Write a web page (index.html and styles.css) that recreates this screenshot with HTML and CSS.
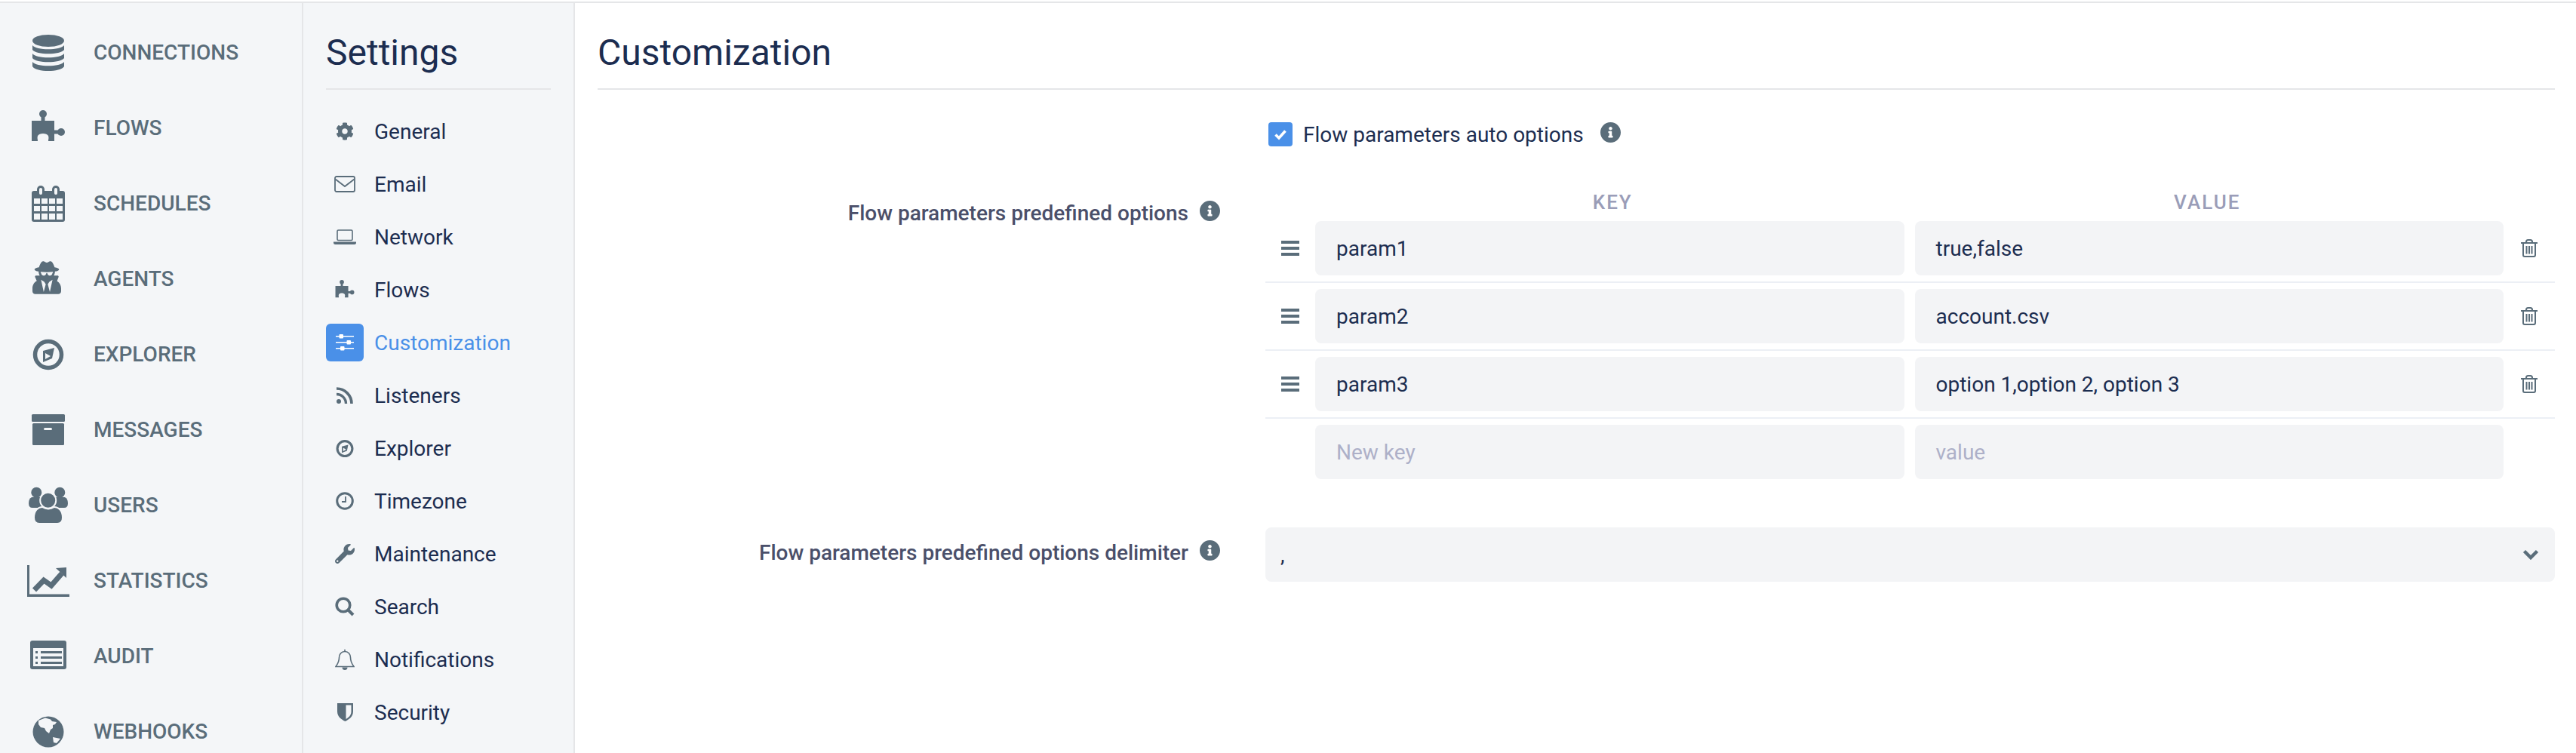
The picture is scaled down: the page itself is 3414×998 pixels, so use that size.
FILE: index.html
```html
<!DOCTYPE html>
<html lang="en">
<head>
<meta charset="utf-8">
<title>Settings - Customization</title>
<link rel="stylesheet" href="styles.css">
</head>
<body>
<svg class="defs" aria-hidden="true">
  <symbol id="i-database" viewBox="0 0 60 60">
    <ellipse cx="30" cy="15" rx="21" ry="8"/>
    <path d="M9 21C14 28 46 28 51 21V27C46 34 14 34 9 27Z"/>
    <path d="M9 32C14 39 46 39 51 32V38C46 45 14 45 9 38Z"/>
    <path d="M9 43C14 50 46 50 51 43V49C46 57 14 57 9 49Z"/>
  </symbol>
  <symbol id="i-puzzle" viewBox="0 0 60 60">
    <circle cx="23" cy="12" r="5"/><rect x="20.5" y="14" width="5" height="9"/>
    <path d="M8 21H38V48H30C30 45 31 44 30 41C28 37 18 37 16 41C15 44 16 45 16 48H8Z"/>
    <circle cx="47" cy="36" r="5"/><rect x="36" y="33.5" width="8" height="5"/>
  </symbol>
  <symbol id="i-calendar" viewBox="0 0 60 60">
    <path d="M11 14H49Q52 14 52 17V52Q52 55 49 55H11Q8 55 8 52V17Q8 14 11 14Z"/>
    <g class="cut">
      <rect x="11" y="24" width="8" height="7"/><rect x="21" y="24" width="8" height="7"/><rect x="31" y="24" width="8" height="7"/><rect x="41" y="24" width="8" height="7"/>
      <rect x="11" y="34" width="8" height="7"/><rect x="21" y="34" width="8" height="7"/><rect x="31" y="34" width="8" height="7"/><rect x="41" y="34" width="8" height="7"/>
      <rect x="11" y="44" width="8" height="8"/><rect x="21" y="44" width="8" height="8"/><rect x="31" y="44" width="8" height="8"/><rect x="41" y="44" width="8" height="8"/>
    </g>
    <rect x="15" y="7" width="10" height="14" rx="5"/><rect x="35" y="7" width="10" height="14" rx="5"/>
    <rect class="cut" x="18" y="10" width="4" height="9" rx="2"/><rect class="cut" x="38" y="10" width="4" height="9" rx="2"/>
  </symbol>
  <symbol id="i-agent" viewBox="0 0 60 60">
    <svg x="9" y="7" width="38" height="44" viewBox="0 0 448 512"><path d="M383.9 308.3l23.9-62.6c4-10.5-3.7-21.7-15-21.7h-58.5c11-18.9 17.8-40.6 17.8-64v-.3c39.2-7.8 64-19.1 64-31.7 0-13.3-27.3-25.1-70.1-33-9.2-32.8-27-65.8-40.6-82.8-9.5-11.9-25.9-15.6-39.5-8.8l-27.6 13.8c-9 4.5-19.6 4.5-28.6 0L182.1 3.4c-13.6-6.8-30-3.1-39.5 8.8-13.5 17-31.4 50-40.6 82.8-42.7 7.9-70 19.7-70 33 0 12.6 24.8 23.9 64 31.7v.3c0 23.4 6.8 45.1 17.8 64H56.3c-11.5 0-19.2 11.7-14.7 22.3l25.8 60.2C27.3 329.8 0 372.7 0 422.4v44.8C0 491.9 20.1 512 44.8 512h358.4c24.7 0 44.8-20.1 44.8-44.8v-44.8c0-48.4-25.8-90.4-64.1-114.1zM176 480l-41.6-192 49.6 32 24 40-32 120zm96 0l-32-120 24-40 49.6-32L272 480zm41.7-298.5c-3.9 11.9-7 24.6-16.5 33.4-10.1 9.3-48 22.4-64-25-2.8-8.4-15.4-8.4-18.3 0-17 50.2-56 32.4-64 25-9.5-8.8-12.7-21.5-16.5-33.4-.8-2.5-6.3-5.7-6.3-5.8v-10.8c28.3 3.6 61 5.8 96 5.8s67.7-2.1 96-5.8v10.8c-.1.1-5.6 3.2-6.4 5.8z"/></svg>
  </symbol>
  <symbol id="i-compass" viewBox="0 0 60 60">
    <circle class="ring" cx="30" cy="31" r="17.5" stroke-width="5.5"/>
    <path d="M23 26L38 22L35 36L23 41Z"/>
    <path class="cut" d="M26 29V37L33 33Z"/>
  </symbol>
  <symbol id="i-archive" viewBox="0 0 60 60">
    <rect x="8" y="10" width="44" height="10" rx="1.5"/>
    <rect x="9" y="22" width="42" height="29" rx="1.5"/>
    <rect class="cut" x="24" y="28" width="11" height="3" rx="1.5"/>
  </symbol>
  <symbol id="i-users" viewBox="0 0 60 60">
    <circle cx="14.3" cy="13.7" r="7"/><circle cx="45.3" cy="13.7" r="7"/>
    <path d="M8 20H20L24 34H9Q4 34 4 28Q4 22 8 20Z"/><path d="M40 20H52Q56 22 56 28Q56 34 51 34H36Z"/>
    <circle class="halo" cx="29.7" cy="24.3" r="10.5"/>
    <path class="halo" d="M11 47C11 37 17 33 22 33Q30 38 38 33C43 33 49 37 49 47Q49 55 42 55H18Q11 55 11 47Z"/>
  </symbol>
  <symbol id="i-chart" viewBox="0 0 60 60">
    <path d="M2 10H5V48.5H58V52H2Z"/>
    <path class="line" d="M11.5 43L24 30L34 37L48 21" stroke-width="7"/>
    <path d="M40 14L54 13V27Z"/>
  </symbol>
  <symbol id="i-audit" viewBox="0 0 60 60">
    <rect x="6" y="10" width="48" height="38" rx="3"/>
    <rect class="cut" x="10" y="20" width="40" height="24"/>
    <path d="M13 24h3v3h-3zM20 24h28v3H20zM13 31h3v3h-3zM20 31h28v3H20zM13 38h3v3h-3zM20 38h28v3H20z"/>
  </symbol>
  <symbol id="i-globe" viewBox="0 0 60 60">
    <circle cx="30" cy="31" r="20.5"/>
    <path class="cut" d="M17 16L26 12.5L33 14.5L35 17L41 18L39 21L36 22L36 26L33 28L31 33L27 30L25 26L20 25L17 21Z"/>
    <path class="cut" d="M36 38L46 40L41 46L37 45Z"/>
  </symbol>
  <symbol id="i-cog" viewBox="0 0 512 512"><path d="M487.4 315.7l-42.6-24.6c4.3-23.2 4.3-47 0-70.2l42.6-24.6c4.9-2.8 7.1-8.6 5.5-14-11.1-35.6-30-67.8-54.7-94.6-3.8-4.1-10-5.1-14.8-2.3L380.8 110c-17.9-15.4-38.5-27.3-60.8-35.1V25.8c0-5.6-3.9-10.5-9.4-11.7-36.7-8.2-74.3-7.8-109.2 0-5.5 1.2-9.4 6.1-9.4 11.7V75c-22.2 7.9-42.8 19.8-60.8 35.1L88.7 85.5c-4.9-2.8-11-1.9-14.8 2.3-24.7 26.7-43.6 58.9-54.7 94.6-1.7 5.4.6 11.2 5.5 14L67.3 221c-4.3 23.2-4.3 47 0 70.2l-42.6 24.6c-4.9 2.8-7.1 8.6-5.5 14 11.1 35.6 30 67.8 54.7 94.6 3.8 4.1 10 5.1 14.8 2.3l42.6-24.6c17.9 15.4 38.5 27.3 60.8 35.1v49.2c0 5.6 3.9 10.5 9.4 11.7 36.7 8.2 74.3 7.8 109.2 0 5.5-1.2 9.4-6.1 9.4-11.7v-49.2c22.2-7.9 42.8-19.8 60.8-35.1l42.6 24.6c4.9 2.8 11 1.9 14.8-2.3 24.7-26.7 43.6-58.9 54.7-94.6 1.5-5.5-.7-11.3-5.6-14.1zM256 336c-44.1 0-80-35.9-80-80s35.9-80 80-80 80 35.9 80 80-35.9 80-80 80z"/></symbol>
  <symbol id="i-mail" viewBox="0 0 28 22">
    <rect class="ring" x="1" y="1" width="26" height="20" rx="2" stroke-width="1.8"/>
    <path class="line" d="M1.5 4.5L14 14L26.5 4.5" stroke-width="1.8"/>
  </symbol>
  <symbol id="i-laptop" viewBox="0 0 30 20">
    <rect class="ring" x="5" y="1" width="20" height="13.5" rx="1.5" stroke-width="1.6"/>
    <path d="M0 16.5H30V17.5Q30 20 27.5 20H2.5Q0 20 0 17.5Z"/>
  </symbol>
  <symbol id="i-sliders" viewBox="0 0 24 22">
    <path d="M0 2H24V3.5H0ZM0 10H24V11.5H0ZM0 18H24V19.5H0Z"/>
    <rect x="4.5" y="0" width="5.5" height="5.5" rx="1"/><rect x="14.5" y="8" width="5.5" height="5.5" rx="1"/><rect x="6" y="16" width="5.5" height="5.5" rx="1"/>
  </symbol>
  <symbol id="i-rss" viewBox="0 0 22 22">
    <circle cx="3" cy="19" r="3"/>
    <path class="line" d="M0 9.5A12.5 12.5 0 0 1 12.5 22" stroke-width="3.4"/>
    <path class="line" d="M0 2A20 20 0 0 1 20 22" stroke-width="3.6"/>
  </symbol>
  <symbol id="i-clock" viewBox="0 0 24 24">
    <circle class="ring" cx="12" cy="12" r="10.3" stroke-width="3"/>
    <path class="line" d="M13 6V13H8" stroke-width="1.8"/>
  </symbol>
  <symbol id="i-wrench" viewBox="0 0 512 512"><path d="M507.73 109.1c-2.24-9.03-13.54-12.09-20.12-5.51l-74.36 74.36-67.88-11.31-11.31-67.88 74.36-74.36c6.62-6.62 3.43-17.9-5.66-20.16-47.38-11.74-99.55.91-136.58 37.93-39.64 39.64-50.55 97.1-34.05 147.2L18.74 402.76c-24.99 24.99-24.99 65.51 0 90.5 24.99 24.99 65.51 24.99 90.5 0l213.21-213.21c50.12 16.71 107.47 5.68 147.37-34.22 37.07-37.07 49.7-89.32 37.91-136.73zM64 472c-13.25 0-24-10.75-24-24 0-13.26 10.75-24 24-24s24 10.74 24 24c0 13.25-10.75 24-24 24z"/></symbol>
  <symbol id="i-search" viewBox="0 0 26 26">
    <circle class="ring" cx="11" cy="11" r="8.8" stroke-width="3.6"/>
    <path class="line" d="M17.5 17.5L24 24" stroke-width="4"/>
  </symbol>
  <symbol id="i-bell" viewBox="0 0 26 28">
    <path class="line" d="M13 3.5C8 3.5 5.5 7.5 5.5 11.5C5.5 17.5 3.5 20 1 23.5H25C22.5 20 20.5 17.5 20.5 11.5C20.5 7.5 18 3.5 13 3.5ZM13 3.5V.8" stroke-width="1.6"/>
    <path d="M9.5 24.5H16.5C16.5 27 15 28 13 28C11 28 9.5 27 9.5 24.5Z"/>
  </symbol>
  <symbol id="i-shield" viewBox="0 0 21 24">
    <path d="M0 0H21V11C21 18 15 22 10.5 24C6 22 0 18 0 11ZM11.5 2.5V21C15 19 18.5 16 18.5 11V2.5Z" fill-rule="evenodd"/>
  </symbol>
  <symbol id="i-info" viewBox="0 0 496 496"><path transform="translate(-8 -8)" d="M256 8C119.043 8 8 119.083 8 256c0 136.997 111.043 248 248 248s248-111.003 248-248C504 119.083 392.957 8 256 8zm0 110c23.196 0 42 18.804 42 42s-18.804 42-42 42-42-18.804-42-42 18.804-42 42-42zm56 254c0 6.627-5.373 12-12 12h-88c-6.627 0-12-5.373-12-12v-24c0-6.627 5.373-12 12-12h12v-64h-12c-6.627 0-12-5.373-12-12v-24c0-6.627 5.373-12 12-12h64c6.627 0 12 5.373 12 12v100h12c6.627 0 12 5.373 12 12v24z"/></symbol>
  <symbol id="i-trash" viewBox="0 0 22 24">
    <path class="line" d="M0 5H22M7 5V3.5Q7 1 9.5 1H12.5Q15 1 15 3.5V5" stroke-width="2"/>
    <path class="line" d="M3 5V21Q3 23 5 23H17Q19 23 19 21V5" stroke-width="2"/>
    <path d="M6.5 9H8.5V19.5H6.5ZM10 9H12V19.5H10ZM13.5 9H15.5V19.5H13.5Z"/>
  </symbol>
</svg>

<div class="app">
  <nav class="nav">
    <a class="nav-item"><svg class="nav-icon"><use href="#i-database"/></svg><span>CONNECTIONS</span></a>
    <a class="nav-item"><svg class="nav-icon"><use href="#i-puzzle"/></svg><span>FLOWS</span></a>
    <a class="nav-item"><svg class="nav-icon"><use href="#i-calendar"/></svg><span>SCHEDULES</span></a>
    <a class="nav-item"><svg class="nav-icon"><use href="#i-agent"/></svg><span>AGENTS</span></a>
    <a class="nav-item"><svg class="nav-icon"><use href="#i-compass"/></svg><span>EXPLORER</span></a>
    <a class="nav-item"><svg class="nav-icon"><use href="#i-archive"/></svg><span>MESSAGES</span></a>
    <a class="nav-item"><svg class="nav-icon"><use href="#i-users"/></svg><span>USERS</span></a>
    <a class="nav-item"><svg class="nav-icon"><use href="#i-chart"/></svg><span>STATISTICS</span></a>
    <a class="nav-item"><svg class="nav-icon"><use href="#i-audit"/></svg><span>AUDIT</span></a>
    <a class="nav-item"><svg class="nav-icon"><use href="#i-globe"/></svg><span>WEBHOOKS</span></a>
  </nav>

  <aside class="settings">
    <h1 class="title">Settings</h1>
    <ul class="menu">
      <li class="menu-item"><span class="menu-box"><svg class="w24 h24"><use href="#i-cog"/></svg></span>General</li>
      <li class="menu-item"><span class="menu-box"><svg class="w28 h22"><use href="#i-mail"/></svg></span>Email</li>
      <li class="menu-item"><span class="menu-box"><svg class="w30 h20"><use href="#i-laptop"/></svg></span>Network</li>
      <li class="menu-item"><span class="menu-box"><svg class="w34 h34"><use href="#i-puzzle"/></svg></span>Flows</li>
      <li class="menu-item active"><span class="menu-box"><svg class="w24 h22"><use href="#i-sliders"/></svg></span>Customization</li>
      <li class="menu-item"><span class="menu-box"><svg class="w22 h22"><use href="#i-rss"/></svg></span>Listeners</li>
      <li class="menu-item"><span class="menu-box"><svg class="w34 h34"><use href="#i-compass"/></svg></span>Explorer</li>
      <li class="menu-item"><span class="menu-box"><svg class="w24 h24"><use href="#i-clock"/></svg></span>Timezone</li>
      <li class="menu-item"><span class="menu-box"><svg class="w26 h26"><use href="#i-wrench"/></svg></span>Maintenance</li>
      <li class="menu-item"><span class="menu-box"><svg class="w26 h26"><use href="#i-search"/></svg></span>Search</li>
      <li class="menu-item"><span class="menu-box"><svg class="w26 h28"><use href="#i-bell"/></svg></span>Notifications</li>
      <li class="menu-item"><span class="menu-box"><svg class="w21 h24"><use href="#i-shield"/></svg></span>Security</li>
    </ul>
  </aside>

  <main class="main">
    <h1 class="title">Customization</h1>

    <div class="form-row row-auto">
      <div></div>
      <div class="check-line">
        <span class="checkbox"><svg viewBox="0 0 20 20" class="check"><path d="M3.5 10.5L8 15L16.5 5.5"/></svg></span>
        <span class="check-label">Flow parameters auto options</span>
        <svg class="info info-auto"><use href="#i-info"/></svg>
      </div>
    </div>

    <div class="form-row row-table">
      <div class="label label-table">Flow parameters predefined options<svg class="info"><use href="#i-info"/></svg></div>
      <div class="kv">
        <div class="kv-row kv-head">
          <span></span><span class="head-key">KEY</span><span class="head-value">VALUE</span><span></span>
        </div>
        <div class="kv-row kv-line">
          <svg class="drag" viewBox="0 0 24 20"><path d="M0 0H24V4H0ZM0 8H24V12H0ZM0 16H24V20H0Z"/></svg>
          <div class="field">param1</div><div class="field">true,false</div>
          <svg class="trash"><use href="#i-trash"/></svg>
        </div>
        <div class="kv-row kv-line">
          <svg class="drag" viewBox="0 0 24 20"><path d="M0 0H24V4H0ZM0 8H24V12H0ZM0 16H24V20H0Z"/></svg>
          <div class="field">param2</div><div class="field">account.csv</div>
          <svg class="trash"><use href="#i-trash"/></svg>
        </div>
        <div class="kv-row kv-line">
          <svg class="drag" viewBox="0 0 24 20"><path d="M0 0H24V4H0ZM0 8H24V12H0ZM0 16H24V20H0Z"/></svg>
          <div class="field">param3</div><div class="field">option 1,option 2, option 3</div>
          <svg class="trash"><use href="#i-trash"/></svg>
        </div>
        <div class="kv-row kv-new">
          <span></span>
          <div class="field placeholder">New key</div><div class="field placeholder">value</div>
          <span></span>
        </div>
      </div>
    </div>

    <div class="form-row row-select">
      <div class="label label-select">Flow parameters predefined options delimiter<svg class="info"><use href="#i-info"/></svg></div>
      <div class="select">
        <span class="select-value">,</span>
        <svg class="chevron" viewBox="0 0 22 14"><path d="M2.5 2.5L11 11L19.5 2.5"/></svg>
      </div>
    </div>
  </main>
</div>
</body>
</html>
```
FILE: styles.css
```css
:root {
  --panel: #f4f6f8;
  --icon: #5a6d7a;
  --ink: #1c2d50;
  --rule: #e5e6e8;
}
* { box-sizing: border-box; }
html, body { margin: 0; height: 100%; background: #fff; overflow: hidden; }
body {
  padding-top: 2px;
  font-family: Roboto, "Liberation Sans", sans-serif;
  color: var(--ink);
}
svg { fill: currentColor; }
svg.defs { display: block; width: 0; height: 0; overflow: hidden; }
.cut { fill: var(--panel); }
.ring { fill: none; stroke: currentColor; }
.line { fill: none; stroke: currentColor; }
.halo { stroke: var(--panel); stroke-width: 2; }

.app {
  display: flex;
  height: 996px;
  border-top: 2px solid var(--rule);
  overflow: hidden;
}

.nav {
  flex: 0 0 402px;
  padding-top: 15px;
  background: var(--panel);
  border-right: 2px solid var(--rule);
  color: var(--icon);
}
.nav-item {
  display: flex;
  align-items: center;
  gap: 30px;
  height: 100px;
  padding-left: 34px;
  font-size: 28px;
  font-weight: 500;
}
.nav-icon { width: 60px; height: 60px; flex: none; }

.settings {
  flex: 0 0 360px;
  padding: 0 30px;
  background: var(--panel);
  border-right: 2px solid var(--rule);
}
.title {
  margin: 0;
  padding: 34px 0 15px;
  font-size: 48px;
  line-height: 64px;
  font-weight: 400;
  border-bottom: 2px solid var(--rule);
}
.menu { list-style: none; margin: 20px 0 0; padding: 0; }
.menu-item {
  display: flex;
  align-items: center;
  gap: 14px;
  height: 70px;
  font-size: 28px;
}
.menu-box {
  display: flex;
  align-items: center;
  justify-content: center;
  width: 50px;
  height: 50px;
  border-radius: 6px;
  color: var(--icon);
}
.active { color: #4a90e8; }
.active .menu-box { background: #4a90e8; color: #fff; }
.w21 { width: 21px; } .w22 { width: 22px; } .w24 { width: 24px; } .w26 { width: 26px; }
.w28 { width: 28px; } .w30 { width: 30px; } .w34 { width: 34px; }
.h20 { height: 20px; } .h22 { height: 22px; } .h24 { height: 24px; } .h26 { height: 26px; }
.h28 { height: 28px; } .h34 { height: 34px; }

.main { flex: 1; min-width: 0; padding: 0 28px 0 30px; }
.form-row {
  display: grid;
  grid-template-columns: 825px 1fr;
  column-gap: 60px;
  align-items: start;
}
.row-auto { margin-top: 41px; }
.row-table { margin-top: 54px; }
.row-select { margin-top: 56px; }

.check-line {
  display: flex;
  align-items: center;
  height: 36px;
  padding-left: 4px;
  font-size: 28px;
}
.checkbox {
  display: flex;
  align-items: center;
  justify-content: center;
  width: 32px;
  height: 32px;
  margin-right: 14px;
  border-radius: 4px;
  background: #4a90e8;
}
.check { width: 20px; height: 20px; fill: none; stroke: #fff; stroke-width: 3.6; }
.check-label { margin-right: 22px; }
.info { flex: none; width: 27px; height: 27px; margin-left: 15px; margin-top: -6px; color: var(--icon); }
.info-auto { margin-left: 0; }

.label {
  display: flex;
  align-items: center;
  justify-content: flex-end;
  height: 36px;
  font-size: 28px;
  font-weight: 500;
  color: #4a4f6a;
}
.label-table { margin-top: 14px; }
.label-select { margin-top: 15px; }

.kv-row {
  display: grid;
  grid-template-columns: 52px 1fr 1fr 54px;
  column-gap: 14px;
  align-items: center;
}
.kv-head {
  height: 35px;
  font-size: 26px;
  font-weight: 500;
  letter-spacing: 2px;
  color: #9a9db8;
  text-align: center;
}
.head-key { padding-left: 8px; }
.head-value { padding-right: 5px; }
.kv-line { padding: 8px 0; border-bottom: 2px solid #eceff5; }
.kv-new { padding: 8px 0; }
.field {
  display: flex;
  align-items: center;
  height: 72px;
  padding: 0 27px 0 28px;
  border-radius: 8px;
  background: #f3f4f6;
  font-size: 28px;
}
.placeholder { color: #adb0c8; }
.drag { width: 24px; height: 20px; margin-left: 21px; color: var(--icon); }
.trash { width: 22px; height: 24px; justify-self: start; margin-left: 9px; color: var(--icon); }

.select {
  display: flex;
  align-items: center;
  justify-content: space-between;
  height: 72px;
  padding: 0 21px 0 20px;
  border-radius: 8px;
  background: #f3f4f6;
  font-size: 28px;
}
.chevron { width: 22px; height: 14px; fill: none; stroke: var(--icon); stroke-width: 4.5; }
```
